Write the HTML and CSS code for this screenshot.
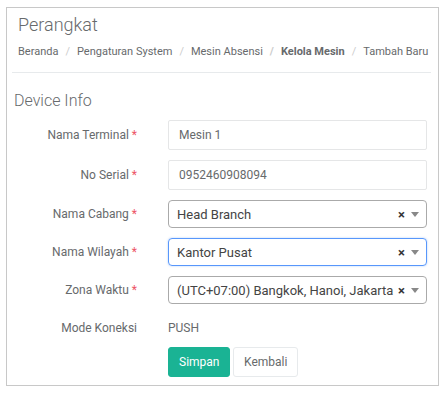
FILE: index.html
```html
<!DOCTYPE html>
<html lang="id">
<head>
    <meta charset="UTF-8">
    <meta name="viewport" content="width=device-width, initial-scale=1.0">
    <title>Perangkat</title>
    <link rel="stylesheet" href="styles.css">
</head>
<body>
    <div class="panel">
        <h2 class="title">Perangkat</h2>
        <ol class="breadcrumb">
            <li>Beranda</li>
            <li>Pengaturan System</li>
            <li>Mesin Absensi</li>
            <li class="active">Kelola Mesin</li>
            <li>Tambah Baru</li>
        </ol>
        <div class="divider"></div>

        <h3 class="section-title">Device Info</h3>

        <form class="form">
            <div class="row">
                <label>Nama Terminal <span class="req">*</span></label>
                <input type="text" class="field" value="Mesin 1">
            </div>
            <div class="row">
                <label>No Serial <span class="req">*</span></label>
                <input type="text" class="field" value="0952460908094">
            </div>
            <div class="row">
                <label>Nama Cabang <span class="req">*</span></label>
                <div class="select">
                    <span class="select-text">Head Branch</span>
                    <span class="clear">&times;</span>
                    <span class="arrow"></span>
                </div>
            </div>
            <div class="row">
                <label>Nama Wilayah <span class="req">*</span></label>
                <div class="select focused">
                    <span class="select-text">Kantor Pusat</span>
                    <span class="clear">&times;</span>
                    <span class="arrow"></span>
                </div>
            </div>
            <div class="row">
                <label>Zona Waktu <span class="req">*</span></label>
                <div class="select">
                    <span class="select-text">(UTC+07:00) Bangkok, Hanoi, Jakarta</span>
                    <span class="clear">&times;</span>
                    <span class="arrow"></span>
                </div>
            </div>
            <div class="row row-static">
                <label>Mode Koneksi</label>
                <span class="static">PUSH</span>
            </div>
            <div class="row actions">
                <button type="button" class="btn btn-primary">Simpan</button>
                <button type="button" class="btn btn-default">Kembali</button>
            </div>
        </form>
    </div>
</body>
</html>
```

FILE: styles.css
```css
body {
    font-family: Roboto, "Open Sans", Arial, sans-serif;
    margin: 0;
    padding: 0;
    background-color: #ffffff;
    color: #676a6c;
}
.panel {
    margin: 7px 8px 0 6px;
    height: 377px;
    border: 1px solid #c8c8c8;
}
.title {
    margin: 0;
    padding: 6px 0 0 11px;
    font-size: 18px;
    font-weight: 300;
    line-height: 22px;
    color: #676a6c;
}
.breadcrumb {
    list-style: none;
    margin: 0;
    padding: 8px 0 0 11px;
    display: flex;
    font-size: 11px;
    line-height: 16px;
    white-space: nowrap;
}
.breadcrumb li + li::before {
    content: "/";
    color: #cccccc;
    padding: 0 7px;
}
.breadcrumb .active {
    font-weight: bold;
}
.divider {
    margin: 12px 7px 0 5px;
    border-top: 1px solid #e7eaec;
}
.section-title {
    margin: 0;
    padding: 18px 0 0 7px;
    font-size: 16px;
    font-weight: 300;
    line-height: 20px;
}
.form {
    margin-top: 9px;
}
.row {
    display: flex;
    align-items: center;
    margin-bottom: 10px;
}
.row label {
    width: 130px;
    padding-right: 31px;
    text-align: right;
    font-size: 12px;
}
.req {
    color: #ed5565;
}
.field {
    width: 259px;
    height: 30px;
    box-sizing: border-box;
    border: 1px solid #e5e6e7;
    border-radius: 2px;
    padding: 0 10px;
    font-family: inherit;
    font-size: 12px;
    color: #676a6c;
}
.select {
    width: 259px;
    height: 28px;
    box-sizing: border-box;
    border: 1px solid #aaaaaa;
    border-radius: 4px;
    display: flex;
    align-items: center;
    padding: 0 7px 0 8px;
    font-size: 13px;
    color: #444444;
}
.select.focused {
    border-color: #5897fb;
    box-shadow: 0 0 2px rgba(88, 151, 251, 0.5);
}
.select-text {
    flex: 1;
    white-space: nowrap;
    overflow: hidden;
}
.clear {
    font-weight: bold;
    font-size: 13px;
    color: #333333;
    margin: 0 6px 0 4px;
}
.arrow {
    width: 0;
    height: 0;
    border-left: 4px solid transparent;
    border-right: 4px solid transparent;
    border-top: 5px solid #888888;
}
.row-static {
    height: 28px;
    margin-bottom: 5px;
}
.static {
    font-size: 12px;
}
.actions {
    padding-left: 161px;
    gap: 3px;
}
.btn {
    height: 30px;
    padding: 0 10px;
    border-radius: 3px;
    font-family: inherit;
    font-size: 12px;
    cursor: pointer;
}
.btn-primary {
    background-color: #1ab394;
    border: 1px solid #1ab394;
    color: #ffffff;
    width: 62px;
}
.btn-default {
    background-color: #ffffff;
    border: 1px solid #e7eaec;
    color: #676a6c;
    width: 65px;
}
```
